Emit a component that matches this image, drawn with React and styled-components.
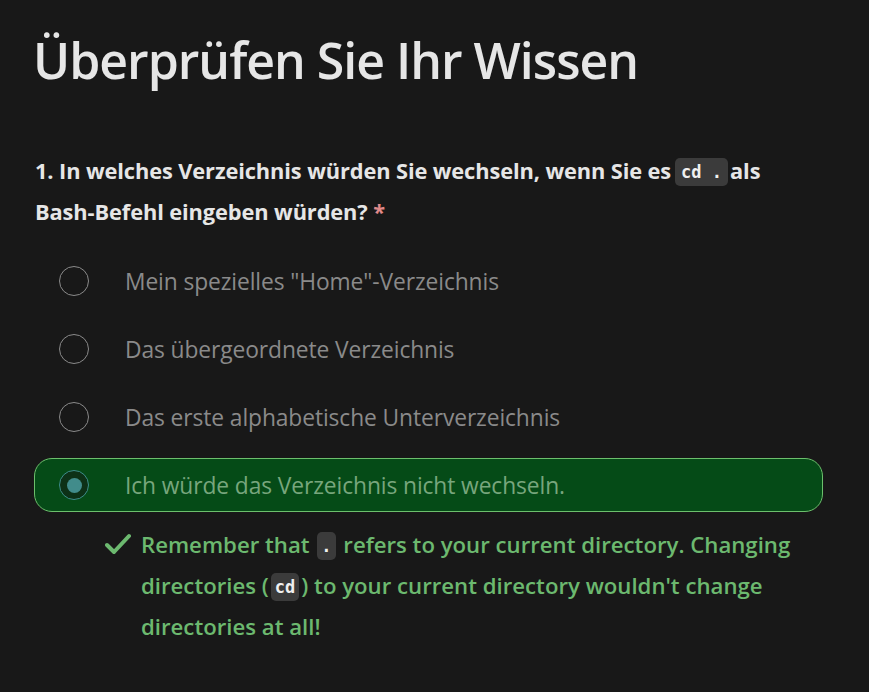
import { createGlobalStyle, styled } from "styled-components";

const GlobalStyle = createGlobalStyle`
    html, body {
        margin: 0;
        padding: 0;
        background-color: #181818;
    }
    body {
        font-family: "Open Sans", "Noto Sans", sans-serif;
    }
`;

const Page = styled.div`
    padding: 22px 34px 40px 34px;
    min-height: 692px;
    box-sizing: border-box;
`;

const Title = styled.h1`
    margin: 0 0 52px -1px;
    font-size: 50px;
    line-height: 76px;
    font-weight: 600;
    letter-spacing: -1px;
    color: #e6e6e6;
`;

const Question = styled.p`
    margin: 0 0 22px 1px;
    font-size: 21.8px;
    line-height: 41px;
    font-weight: 700;
    letter-spacing: -0.1px;
    color: #e6e6e6;
`;

const NoWrap = styled.span`
    white-space: nowrap;
`;

const Required = styled.span`
    color: #e08a8a;
`;

const Code = styled.code`
    display: inline-block;
    font-family: "DejaVu Sans Mono", "Liberation Mono", monospace;
    font-weight: 700;
    font-size: 17px;
    line-height: 28px;
    padding: 0 6px;
    margin: 0 2px 0 4px;
    border-radius: 5px;
    background-color: #3b3b3b;
    color: #f0f0f0;
    letter-spacing: 0;
    vertical-align: 1px;
`;

const Options = styled.div`
    display: flex;
    flex-direction: column;
    gap: 14px;
    width: 789px;
`;

const Option = styled.label`
    display: flex;
    align-items: center;
    gap: 36px;
    height: 54px;
    padding: 0 24px;
    box-sizing: border-box;
    border-radius: 18px;
    border: 1px solid ${p => p.selected ? "#6cbf6c" : "transparent"};
    background-color: ${p => p.selected ? "#054b17" : "transparent"};
    color: ${p => p.selected ? "#78a67d" : "#8a8a8a"};
    font-size: 22.8px;
    letter-spacing: -0.1px;
`;

const Radio = styled.span`
    width: 28px;
    height: 28px;
    border-radius: 50%;
    flex-shrink: 0;
    display: flex;
    align-items: center;
    justify-content: center;
    border: 1px solid ${p => p.selected ? "#3d8d8a" : "#8a8a8a"};
    background-color: ${p => p.selected ? "#0d3117" : "transparent"};
    &::after {
        content: "";
        display: ${p => p.selected ? "block" : "none"};
        width: 15px;
        height: 15px;
        border-radius: 50%;
        background-color: #418c8b;
    }
`;

const Feedback = styled.div`
    display: flex;
    gap: 10px;
    margin: 12px 0 0 71px;
    width: 720px;
    color: #6cb96f;
    font-size: 22.2px;
    line-height: 41px;
    font-weight: 600;
    letter-spacing: 0;
`;

const CheckIcon = styled.svg`
    flex-shrink: 0;
    margin-top: 9px;
`;

const InlineCode = styled(Code)`
    font-size: 17px;
    line-height: 28px;
    padding: 0 4px;
    margin: 0 2px;
`;

const options = [
    'Mein spezielles "Home"-Verzeichnis',
    "Das übergeordnete Verzeichnis",
    "Das erste alphabetische Unterverzeichnis",
    "Ich würde das Verzeichnis nicht wechseln.",
];

export default function App() {
    const selected = 3;
    return (
        <>
            <GlobalStyle />
            <Page>
                <Title>Überprüfen Sie Ihr Wissen</Title>
                <Question>
                    1. In welches Verzeichnis würden Sie wechseln, wenn Sie es<Code>cd .</Code>als <NoWrap>Bash-Befehl</NoWrap> eingeben würden? <Required>*</Required>
                </Question>
                <Options>
                    {options.map((text, i) => (
                        <Option key={i} selected={i === selected}>
                            <Radio selected={i === selected} />
                            {text}
                        </Option>
                    ))}
                </Options>
                <Feedback>
                    <CheckIcon width="26" height="22" viewBox="0 0 26 22">
                        <path d="M2 12 L9 19 L24 3" fill="none" stroke="#6cb96f" strokeWidth="4" strokeLinecap="round" strokeLinejoin="round" />
                    </CheckIcon>
                    <div>
                        Remember that <InlineCode>.</InlineCode> refers to your current directory. Changing directories (<InlineCode>cd</InlineCode>) to your current directory wouldn't change directories at all!
                    </div>
                </Feedback>
            </Page>
        </>
    );
}
